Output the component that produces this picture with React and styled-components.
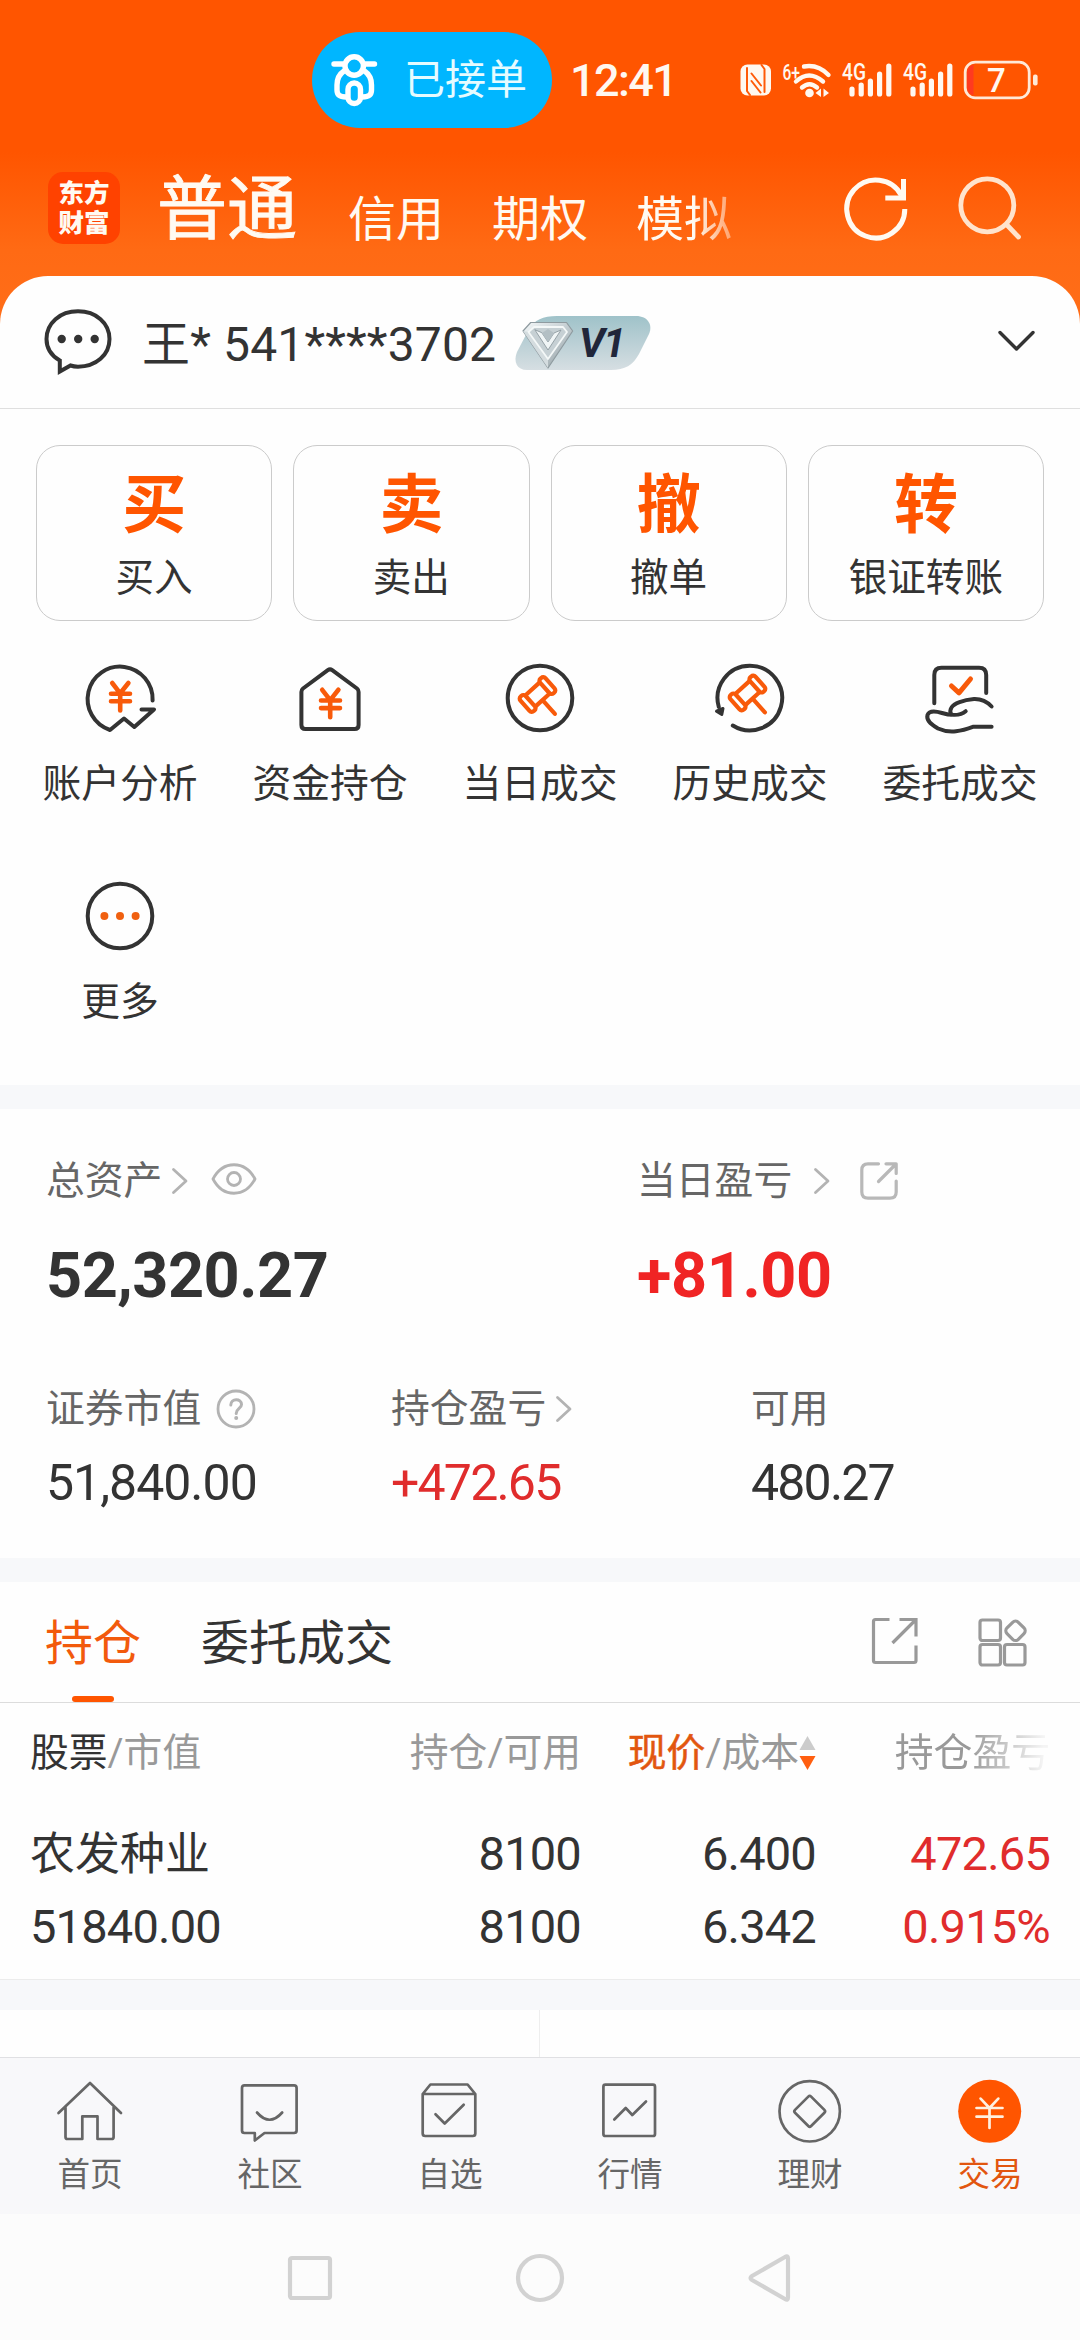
import React from "react";
import styled, { createGlobalStyle } from "styled-components";

const ORANGE = "#ff5500";
const INK = "#333333";
const GREY = "#666666";
const LIGHT = "#999999";
const RED = "#e02c2c";

const GlobalStyle = createGlobalStyle`
  *, *::before, *::after { box-sizing: border-box; }
  html, body { margin: 0; padding: 0; background: #fcfcfc; }
  body {
    font-family: Roboto, "Noto Sans CJK SC", sans-serif;
    color: ${INK};
  }
  svg { display: block; flex: none; overflow: visible; }
`;

const Screen = styled.div`
  width: 1080px;
  height: 2340px;
  display: flex;
  flex-direction: column;
  overflow: hidden;
  background: linear-gradient(180deg, #ff5500 0, #ff5500 152px, #ff6a14 250px, #ff6e19 330px, #ffffff 331px);
`;

/* ---------- status bar ---------- */

const StatusBar = styled.div`
  height: 160px;
  padding-left: 312px;
  display: flex;
  align-items: center;
  color: #fff8f0;
`;

const OrderPill = styled.div`
  width: 240px;
  height: 96px;
  padding-left: 18px;
  border-radius: 48px;
  background: #00b6ff;
  display: flex;
  align-items: center;
  gap: 26px;
  font-size: 41px;
  line-height: 60px;
  color: #e6fbff;
`;

const Clock = styled.span`
  width: 170px;
  margin-left: 18px;
  padding-top: 2px;
  font-size: 45px;
  line-height: 60px;
  font-weight: 500;
  letter-spacing: -1.6px;
  white-space: nowrap;
`;

const StatusIcons = styled.div`
  display: flex;
  align-items: center;
  gap: 11px;
`;

/* ---------- header ---------- */

const Header = styled.div`
  height: 116px;
  padding: 0 58px 20px 48px;
  display: flex;
  align-items: center;
  color: #fffaf2;
`;

const Logo = styled.div`
  width: 72px;
  height: 72px;
  border-radius: 15px;
  background: #ff4200;
  display: grid;
  place-content: center;
  text-align: center;
  font-size: 25.5px;
  line-height: 30px;
  font-weight: 900;
`;

const AccountTabs = styled.div`
  flex: 1;
  margin-left: 37px;
  display: flex;
  align-items: center;
  gap: 48px;
`;

const AccountTab = styled.span`
  padding-top: ${(p) => (p.$active ? 4 : 23)}px;
  margin-right: ${(p) => (p.$active ? 3 : 0)}px;
  font-size: ${(p) => (p.$active ? 70 : 48)}px;
  line-height: 90px;
  -webkit-text-stroke: ${(p) => (p.$active ? 0.9 : 0)}px currentColor;
  white-space: nowrap;
  ${(p) =>
    p.$fade &&
    `mask-image: linear-gradient(90deg, #000 60%, rgba(0,0,0,.4) 100%);`}
`;

const HeaderTools = styled.div`
  display: flex;
  gap: 50px;
`;

/* ---------- account sheet ---------- */

const Sheet = styled.section`
  background: #fefefe;
  border-radius: 48px 48px 0 0;
`;

const AccountRow = styled.div`
  height: 133px;
  padding: 2px 44px 0 44px;
  border-bottom: 1px solid #dfdfdf;
  display: flex;
  align-items: center;
`;

const AccountName = styled.span`
  width: 353px;
  margin: 0 20px 0 30px;
  padding-top: 3px;
  font-size: 48px;
  line-height: 70px;
  letter-spacing: 0.15px;
  white-space: nowrap;
`;

const LevelBadge = styled.div`
  position: relative;
  width: 136px;
  height: 54px;
  margin-right: auto;
`;

const LevelText = styled.span`
  position: absolute;
  left: 64px;
  top: 2px;
  font-size: 41px;
  line-height: 50px;
  font-weight: 700;
  font-style: italic;
  letter-spacing: -2px;
  color: #20263a;
`;

const ActionRow = styled.div`
  padding: 36px 36px 0;
  display: grid;
  grid-template-columns: repeat(4, 1fr);
  gap: 21px;
`;

const ActionButton = styled.div`
  height: 176px;
  border: 1.5px solid #cbcbcb;
  border-radius: 24px;
  padding-top: 24px;
  display: flex;
  flex-direction: column;
  align-items: center;
`;

const ActionGlyph = styled.span`
  font-size: 64px;
  line-height: 72px;
  font-weight: 700;
  color: ${ORANGE};
`;

const ActionLabel = styled.span`
  margin-top: 12px;
  font-size: 38.6px;
  line-height: 48px;
`;

const ShortcutGrid = styled.div`
  padding: 0 15px 29px;
  display: grid;
  grid-template-columns: repeat(5, 210px);
  grid-auto-rows: 217.5px;
`;

const Shortcut = styled.div`
  padding-top: 37px;
  display: flex;
  flex-direction: column;
  align-items: center;
  gap: 21px;
  font-size: 38.8px;
  line-height: 50px;
`;

const Strip = styled.div`
  height: ${(p) => p.$h || 24}px;
  background: #f7f8fa;
`;

/* ---------- assets ---------- */

const Assets = styled.section`
  height: 449px;
  padding: 47px 0 0 46px;
  background: #fefefe;
`;

const AssetRow = styled.div`
  display: grid;
  grid-template-columns: ${(p) => p.$cols};
  margin-bottom: ${(p) => p.$gap || 0}px;
`;

const AssetLabel = styled.div`
  height: 50px;
  display: flex;
  align-items: center;
  font-size: 38.8px;
  line-height: 50px;
  color: ${GREY};
`;

const Spacer = styled.span`
  width: ${(p) => p.$w}px;
`;

const BigValue = styled.div`
  margin-top: 34px;
  font-size: 63px;
  line-height: 72px;
  font-weight: 700;
  letter-spacing: ${(p) => p.$ls || "0"};
  color: ${(p) => (p.$up ? "#f02424" : INK)};
`;

const SmallValue = styled.div`
  margin-top: 24px;
  font-size: 50px;
  line-height: 50px;
  letter-spacing: ${(p) => p.$ls || "-1.8px"};
  color: ${(p) => (p.$up ? RED : INK)};
`;

/* ---------- positions ---------- */

const Positions = styled.section`
  background: #fefefe;
`;

const PositionTabs = styled.div`
  height: 121px;
  padding: 0 52px 0 45px;
  border-bottom: 1px solid #dcdcdc;
  display: flex;
  align-items: center;
`;

const PositionTab = styled.span`
  position: relative;
  margin-right: 60px;
  padding-top: 4px;
  font-size: 48px;
  line-height: 116px;
  color: ${(p) => (p.$active ? "#f25a0c" : INK)};
  &::after {
    content: "";
    display: ${(p) => (p.$active ? "block" : "none")};
    position: absolute;
    left: 27px;
    bottom: 0;
    width: 42px;
    height: 6px;
    border-radius: 3px;
    background: ${ORANGE};
  }
`;

const TabTools = styled.div`
  margin-left: auto;
  display: flex;
  gap: 59px;
`;

const TableRow = styled.div`
  padding-left: 30px;
  display: grid;
  grid-template-columns: 313px 238px 235px 234px;
`;

const TableHead = styled(TableRow)`
  height: 100px;
  margin-bottom: 14px;
  font-size: 38.8px;
  line-height: 100px;
  color: ${LIGHT};
  white-space: nowrap;
`;

const HeadCell = styled.span`
  display: flex;
  align-items: center;
  justify-content: ${(p) => (p.$first ? "flex-start" : "flex-end")};
  ${(p) =>
    p.$fade &&
    `mask-image: linear-gradient(90deg, #000 65%, rgba(0,0,0,.1) 97%);`}
`;

const Strong = styled.span`
  color: ${(p) => (p.$accent ? "#e2560f" : INK)};
  -webkit-text-stroke: ${(p) => (p.$accent ? 0.5 : 0)}px currentColor;
`;

const Cell = styled.div`
  display: flex;
  flex-direction: column;
  align-items: ${(p) => (p.$first ? "flex-start" : "flex-end")};
  font-size: 47px;
  line-height: 73px;
  letter-spacing: -0.8px;
  color: ${(p) => (p.$up ? RED : INK)};
`;

const StockName = styled.span`
  height: 73px;
  padding-top: 1px;
  font-size: 45px;
  letter-spacing: 0;
`;

const TableEnd = styled.div`
  height: 17px;
  border-bottom: 1px solid #ececec;
`;

const QuoteStrip = styled.div`
  height: 47px;
  display: grid;
  grid-template-columns: 540px 1fr;
  background: #fefefe;
`;

const QuoteCell = styled.div`
  border-right: 1px solid #eeeeee;
`;

/* ---------- bottom navigation ---------- */

const NavBar = styled.nav`
  height: 157px;
  padding-top: 17px;
  border-top: 1px solid #e0e0e3;
  background: #f8f8fa;
  display: grid;
  grid-template-columns: repeat(6, 180px);
`;

const NavItem = styled.div`
  display: flex;
  flex-direction: column;
  align-items: center;
  gap: 8px;
  font-size: 32.6px;
  line-height: 40px;
  color: ${(p) => (p.$active ? "#e2560f" : GREY)};
`;

const SystemBar = styled.div`
  flex: 1;
  background: #fcfcfc;
  padding-top: 1px;
  display: flex;
  align-items: center;
  justify-content: center;
  gap: 184px;
`;

/* ---------- icons ---------- */

const Svg = ({ w, h, children, ...rest }) => (
  <svg
    width={w}
    height={h || w}
    viewBox={`0 0 ${w} ${h || w}`}
    fill="none"
    strokeLinecap="round"
    strokeLinejoin="round"
    {...rest}
  >
    {children}
  </svg>
);

const Scooter = () => (
  <Svg w={48} h={56} stroke="#fff" strokeWidth="5.4">
    <circle cx="24.2" cy="14" r="9.2" />
    <path d="M4 12H13M35.500 12H44.500" />
    <path d="M14 19C8 23 7 28 7 33V38C7 43 10 45 16 45" />
    <path d="M34.500 19C40.500 23 41.500 28 41.500 33V38C41.500 43 38.500 45 32.500 45" />
    <rect x="18" y="31" width="12.500" height="20.500" rx="6.200" />
  </Svg>
);

const Nfc = () => (
  <Svg w={32}>
    <rect x="0.500" y="0.500" width="30.500" height="31" rx="7" fill="#fff8f0" />
    <path
      d="M7 4V27L10 31M24.500 28V5L21.500 1M11.500 9.500L21 21.500M11.500 17L20.500 28.500"
      stroke="#ff5a08"
      strokeWidth="2"
    />
  </Svg>
);

const Wifi = () => (
  <Svg w={48} h={36} stroke="#fff8f0" strokeWidth="4.400">
    <text x="-0.500" y="17.500" fontSize="22" fontWeight="500" fill="#fff8f0" stroke="none" textLength="17.500" lengthAdjust="spacingAndGlyphs">6+</text>
    <path d="M21 4.500Q35 2 45.500 13" />
    <path d="M13 19.500Q26 7.500 40 19.500" />
    <path d="M19 25.500Q26.500 19 34 25.500" />
    <circle cx="26.500" cy="31" r="4.300" fill="#fff8f0" stroke="none" />
    <path d="M38 26.500V35L32.500 31Z M40.500 26.500V35L46 31Z" fill="#fff8f0" stroke="none" />
  </Svg>
);

const Signal = () => (
  <Svg w={50} h={36} stroke="#fff8f0" strokeWidth="5.200">
    <text x="0" y="18" fontSize="23" fontWeight="500" fill="#fff8f0" stroke="none" textLength="24" lengthAdjust="spacingAndGlyphs">4G</text>
    <path d="M10 27V32M19.200 23V32M28.400 19V32M37.600 12V32M46.800 4V32" />
  </Svg>
);

const Battery = () => (
  <Svg w={74} h={38}>
    <path d="M12 3.500H9.500V34.500H12Q3 34.500 3 26V12Q3 3.500 12 3.500Z" fill="#ff3a20" />
    <rect x="1.200" y="1.200" width="64" height="35.600" rx="10" stroke="#ffe9d8" strokeWidth="2.800" />
    <rect x="69" y="13.500" width="4.600" height="11" rx="2" fill="#ffe9d8" />
    <text x="32.500" y="30.500" fontSize="33" fontWeight="500" fill="#fff8f0" textAnchor="middle">7</text>
  </Svg>
);

const Refresh = () => (
  <Svg w={64} stroke="#fffaf2" strokeWidth="5" strokeLinecap="butt" strokeLinejoin="miter">
    <path d="M60.800 33A29 29 0 1 1 57.500 19.500" />
    <path d="M59.500 3V22H41.300" />
  </Svg>
);

const Search = () => (
  <Svg w={64} stroke="#ffe3cd" strokeWidth="4.800">
    <circle cx="29.300" cy="29.300" r="26.500" />
    <path d="M49 49L60.500 61" />
  </Svg>
);

const Chat = () => (
  <Svg w={68} stroke={INK} strokeWidth="4" strokeLinejoin="miter">
    <path d="M15.800 62.500V51.500C7 46.500 2.500 39 2.500 30C2.500 14 16 2.300 34 2.300S65.500 14 65.500 30S52 57.700 34 57.700Q30 57.700 26.500 56.500Z" />
    <g fill={INK} stroke="none">
      <circle cx="17.700" cy="30" r="4.200" />
      <circle cx="34.200" cy="30" r="4.200" />
      <circle cx="50.700" cy="30" r="4.200" />
    </g>
  </Svg>
);

const BadgeArt = () => (
  <Svg w={136} h={54}>
    <defs>
      <linearGradient id="plate" x1="0" y1="0" x2="0" y2="1">
        <stop offset="0" stopColor="#9fc2c9" />
        <stop offset="1" stopColor="#d6dee2" />
      </linearGradient>
      <linearGradient id="gem" x1="0" y1="0" x2="1" y2="1">
        <stop offset="0" stopColor="#f4f8f9" />
        <stop offset="0.500" stopColor="#c3cdd1" />
        <stop offset="1" stopColor="#8d999e" />
      </linearGradient>
    </defs>
    <path d="M42 0H121C133 0 138 9 134 18L124 38C118 49 110 54 96 54H12C2 54 -2 46 2 36L14 13C19 4 28 0 42 0Z" fill="url(#plate)" />
    <path d="M15.700 6.500H51.500L57.700 15L33 52L8 15Z" fill="url(#gem)" stroke="#8f9ba0" strokeWidth="1.200" />
    <path d="M8 15L13.500 16L33 43V52Z" fill="#d4dcdf" />
    <path d="M19 11H48L52 16L33 43L13.500 16Z" fill="#c6d0d4" stroke="#f4f8f8" strokeWidth="1.800" />
    <path d="M20 14L33 34L46 14L39 17L33 26L27 17Z" fill="#f0f5f6" stroke="#8f9ba0" strokeWidth="0.900" />
    <path d="M27 17L33 13L39 17L33 26Z" fill="#b3bfc4" />
  </Svg>
);

const ChevronDown = () => (
  <Svg w={40} h={28} stroke={INK} strokeWidth="3.400">
    <path d="M4 3.500L20.500 20L37 3.500" />
  </Svg>
);

const Yen = ({ dx = 0, dy = 0 }) => (
  <path
    transform={`translate(${dx} ${dy})`}
    d="M32.200 25L40.200 35.300L48.400 25M31 35.700H50M31 43.300H50M40.200 36V52.500"
    stroke="#f85a0a"
    strokeWidth="4.600"
  />
);

const Hammer = ({ dy = 0 }) => (
  <g transform={`translate(37.500 ${36.5 + dy}) rotate(-42)`} stroke="#f85a0a" strokeWidth="4.200">
    <rect x="-16.800" y="-9.800" width="7" height="19.600" rx="3" />
    <rect x="9.800" y="-9.800" width="7" height="19.600" rx="3" />
    <path d="M-9 -7.500H9M-9 7.500H9M0 8V26" />
  </g>
);

const Shape = ({ children }) => (
  <Svg w={80} stroke={INK} strokeWidth="4">
    {children}
  </Svg>
);

const shortcutIcons = {
  analysis: (
    <Shape>
      <path d="M72.600 42.500A32.500 32.500 0 1 0 30 72L44 60.500L54.300 69L74 51.400H61.500" />
      <Yen />
    </Shape>
  ),
  funds: (
    <Shape>
      <path d="M37.800 12.200Q40 10.600 42.200 12.200L67 30.500Q68.600 31.800 68.600 34V67Q68.600 71 64.600 71H15.400Q11.400 71 11.400 67V34Q11.400 31.800 13 30.500Z" />
      <Yen dy={6.8} />
    </Shape>
  ),
  today: (
    <Shape>
      <circle cx="40" cy="40" r="32.300" />
      <Hammer />
    </Shape>
  ),
  history: (
    <Shape>
      <path d="M22.800 67.500A32.300 32.300 0 1 0 8.800 49" />
      <path d="M6.500 53.200L13 50.500L11.800 56.500Z" fill={INK} strokeWidth="3" />
      <Hammer dy={-1.5} />
    </Shape>
  ),
  orders: (
    <Shape>
      <path d="M14.300 45.300V17Q14.300 9.700 21.500 9.700H59Q66.200 9.700 66.200 17V35" />
      <path d="M31.500 28L39 34.800L50.500 21" stroke="#f85a0a" strokeWidth="5" />
      <path d="M71.600 48.500C66 42.500 60 40.800 54 41C43 42 34 45.500 31.500 49.500Q29.500 52.500 31 56.300" />
      <path d="M45.700 53.200C40 58 30 57.500 22 55C14 52.500 9 53 7.500 57C6 62 11 66.500 18 70.500C30 76 42 73 53.500 68.700H71.600" />
    </Shape>
  ),
  more: (
    <Shape>
      <circle cx="40" cy="40" r="32.300" />
      <g fill="#f06010" stroke="none">
        <circle cx="24.400" cy="40" r="4" />
        <circle cx="40" cy="40" r="4" />
        <circle cx="55.600" cy="40" r="4" />
      </g>
    </Shape>
  ),
};

const ChevronRight = () => (
  <Svg w={16} h={26} stroke="#b3b3b3" strokeWidth="2.800">
    <path d="M1.500 1.500L14 13L1.500 24.500" />
  </Svg>
);

const Eye = () => (
  <Svg w={46} h={34} stroke="#b3b3b3" strokeWidth="2.800">
    <path d="M2 15C12 -4 34 -4 44 15C34 34 12 34 2 15Z" />
    <circle cx="23" cy="15" r="6.500" />
  </Svg>
);

const ShareSoft = () => (
  <Svg w={38} stroke="#b8b8b8" strokeWidth="3.200">
    <path d="M18.500 1.800H8Q1.800 1.800 1.800 8V30Q1.800 36.200 8 36.200H30Q36.200 36.200 36.200 30V19" />
    <path d="M26 1.800H36.200V11.500M36 2L18.500 19.500" />
  </Svg>
);

const Question = () => (
  <Svg w={40} stroke="#b3b3b3" strokeWidth="2.800">
    <circle cx="20" cy="20" r="18" />
    <path d="M14.800 16C14.800 9 25.500 9 25.500 15.500C25.500 19.500 20.200 19.500 20.200 24.500" strokeWidth="3" />
    <circle cx="20.200" cy="29" r="2" fill="#b3b3b3" stroke="none" />
  </Svg>
);

const ShareSquare = () => (
  <Svg w={48} stroke={LIGHT} strokeWidth="3.200" strokeLinecap="butt">
    <path d="M18.500 2.500H4.500Q2.500 2.500 2.500 4.500V43.500Q2.500 45.500 4.500 45.500H43Q45 45.500 45 43.500V28.500" />
    <path d="M28.500 2.500H45V19.500M44 3.500L21.500 26" strokeLinejoin="miter" />
  </Svg>
);

const Widgets = () => (
  <Svg w={50} stroke={LIGHT} strokeWidth="3.200">
    <rect x="2" y="3" width="20.500" height="20.500" rx="2.500" />
    <rect x="2" y="27.500" width="20.500" height="20.500" rx="2.500" />
    <rect x="26.500" y="27.500" width="20.500" height="20.500" rx="2.500" />
    <rect x="29.500" y="5.800" width="16" height="16" rx="4" transform="rotate(45 37.500 13.800)" />
  </Svg>
);

const SortArrows = () => (
  <Svg w={17} h={36}>
    <path d="M8.500 1L16.500 15H.5Z" fill="#cccccc" />
    <path d="M8.500 35L16.500 21H.5Z" fill="#ff5f10" />
  </Svg>
);

const NavShape = ({ children }) => (
  <Svg w={72} stroke={GREY} strokeWidth="2.700">
    {children}
  </Svg>
);

const navIcons = {
  home: (
    <NavShape>
      <path d="M4.500 38L36 8L67 38M11.500 32.500V62Q11.500 64 13.500 64H28.300V41.300H43.500V64H57.600Q59.600 64 59.600 62V32.500" />
    </NavShape>
  ),
  community: (
    <NavShape>
      <path d="M10.500 10.400H60Q62.600 10.400 62.600 13V55.500Q62.600 58 60 58H30.500L20.800 65.500V58H10.500Q8 58 8 55.500V13Q8 10.400 10.500 10.400Z" />
      <path d="M23 37.500Q35.500 52 48.200 37.500" />
    </NavShape>
  ),
  watch: (
    <NavShape>
      <path d="M8.700 19L16.400 9.500H53.600L61.300 19V58.500Q61.300 61 58.800 61H11.200Q8.700 61 8.700 58.500ZM8.700 19H61.300" />
      <path d="M21.500 39.200L30.700 48.500L49.700 29.800" />
    </NavShape>
  ),
  market: (
    <NavShape>
      <rect x="9.400" y="9.700" width="51.600" height="51.300" rx="2" />
      <path d="M20.300 44.500L31.700 33L38.300 40L52 26.500" />
    </NavShape>
  ),
  wealth: (
    <NavShape>
      <circle cx="35.700" cy="36.300" r="30.200" />
      <rect x="24.300" y="24.900" width="22.800" height="22.800" rx="2" transform="rotate(45 35.700 36.300)" />
    </NavShape>
  ),
  trade: (
    <NavShape>
      <circle cx="35.700" cy="36.300" r="31.500" fill={ORANGE} stroke="none" />
      <path d="M26.600 23.600L35.500 33L44.300 23.600M22.500 33H48.500M22.500 41.700H48.500M35.500 33V53" stroke="#fff0e0" />
    </NavShape>
  ),
};

/* ---------- data ---------- */

const actions = [
  ["买", "买入"],
  ["卖", "卖出"],
  ["撤", "撤单"],
  ["转", "银证转账"],
];

const shortcuts = [
  ["analysis", "账户分析"],
  ["funds", "资金持仓"],
  ["today", "当日成交"],
  ["history", "历史成交"],
  ["orders", "委托成交"],
  ["more", "更多"],
];

const navItems = [
  ["home", "首页"],
  ["community", "社区"],
  ["watch", "自选"],
  ["market", "行情"],
  ["wealth", "理财"],
  ["trade", "交易"],
];

export default function App() {
  return (
    <Screen>
      <GlobalStyle />
      <StatusBar>
        <OrderPill>
          <Scooter />
          已接单
        </OrderPill>
        <Clock>12:41</Clock>
        <StatusIcons>
          <Nfc />
          <Wifi />
          <Signal />
          <Signal />
          <Battery />
        </StatusIcons>
      </StatusBar>

      <Header>
        <Logo>
          <span>东方</span>
          <span>财富</span>
        </Logo>
        <AccountTabs>
          <AccountTab $active>普通</AccountTab>
          <AccountTab>信用</AccountTab>
          <AccountTab>期权</AccountTab>
          <AccountTab $fade>模拟</AccountTab>
        </AccountTabs>
        <HeaderTools>
          <Refresh />
          <Search />
        </HeaderTools>
      </Header>

      <Sheet>
        <AccountRow>
          <Chat />
          <AccountName>王* 541****3702</AccountName>
          <LevelBadge>
            <BadgeArt />
            <LevelText>V1</LevelText>
          </LevelBadge>
          <ChevronDown />
        </AccountRow>
        <ActionRow>
          {actions.map(([glyph, label]) => (
            <ActionButton key={label}>
              <ActionGlyph>{glyph}</ActionGlyph>
              <ActionLabel>{label}</ActionLabel>
            </ActionButton>
          ))}
        </ActionRow>
        <ShortcutGrid>
          {shortcuts.map(([icon, label]) => (
            <Shortcut key={label}>
              {shortcutIcons[icon]}
              {label}
            </Shortcut>
          ))}
        </ShortcutGrid>
      </Sheet>

      <Strip />

      <Assets>
        <AssetRow $cols="591px 1fr" $gap={72}>
          <div>
            <AssetLabel>
              总资产
              <Spacer $w={10} />
              <ChevronRight />
              <Spacer $w={23} />
              <Eye />
            </AssetLabel>
            <BigValue $ls="-0.5px">52,320.27</BigValue>
          </div>
          <div>
            <AssetLabel>
              当日盈亏
              <Spacer $w={22} />
              <ChevronRight />
              <Spacer $w={30} />
              <ShareSoft />
            </AssetLabel>
            <BigValue $up $ls="-0.4px">+81.00</BigValue>
          </div>
        </AssetRow>
        <AssetRow $cols="345px 360px 1fr">
          <div>
            <AssetLabel>
              证券市值
              <Spacer $w={15} />
              <Question />
            </AssetLabel>
            <SmallValue $ls="-1px">51,840.00</SmallValue>
          </div>
          <div>
            <AssetLabel>
              持仓盈亏
              <Spacer $w={10} />
              <ChevronRight />
            </AssetLabel>
            <SmallValue $up>+472.65</SmallValue>
          </div>
          <div>
            <AssetLabel>可用</AssetLabel>
            <SmallValue>480.27</SmallValue>
          </div>
        </AssetRow>
      </Assets>

      <Strip />

      <Positions>
        <PositionTabs>
          <PositionTab $active>持仓</PositionTab>
          <PositionTab>委托成交</PositionTab>
          <TabTools>
            <ShareSquare />
            <Widgets />
          </TabTools>
        </PositionTabs>
        <TableHead>
          <HeadCell $first>
            <Strong>股票</Strong>/市值
          </HeadCell>
          <HeadCell>持仓/可用</HeadCell>
          <HeadCell>
            <Strong $accent>现价</Strong>/成本
            <SortArrows />
          </HeadCell>
          <HeadCell $fade>持仓盈亏</HeadCell>
        </TableHead>
        <TableRow>
          <Cell $first>
            <StockName>农发种业</StockName>
            <span>51840.00</span>
          </Cell>
          <Cell>
            <span>8100</span>
            <span>8100</span>
          </Cell>
          <Cell>
            <span>6.400</span>
            <span>6.342</span>
          </Cell>
          <Cell $up>
            <span>472.65</span>
            <span>0.915%</span>
          </Cell>
        </TableRow>
        <TableEnd />
      </Positions>

      <Strip $h={30} />
      <QuoteStrip>
        <QuoteCell />
      </QuoteStrip>

      <NavBar>
        {navItems.map(([icon, label]) => (
          <NavItem key={label} $active={icon === "trade"}>
            {navIcons[icon]}
            {label}
          </NavItem>
        ))}
      </NavBar>

      <SystemBar>
        <Svg w={44} stroke="#d2d2d2" strokeWidth="4.200">
          <rect x="2" y="2" width="40" height="40" rx="2" />
        </Svg>
        <Svg w={48} stroke="#d2d2d2" strokeWidth="4.200">
          <circle cx="24" cy="24" r="22" />
        </Svg>
        <Svg w={44} h={48} stroke="#d2d2d2" strokeWidth="4.200">
          <path d="M40 4.500V43.500Q40 47 37 45L4 26Q1 24 4 22L37 3Q40 1 40 4.500Z" />
        </Svg>
      </SystemBar>
    </Screen>
  );
}
